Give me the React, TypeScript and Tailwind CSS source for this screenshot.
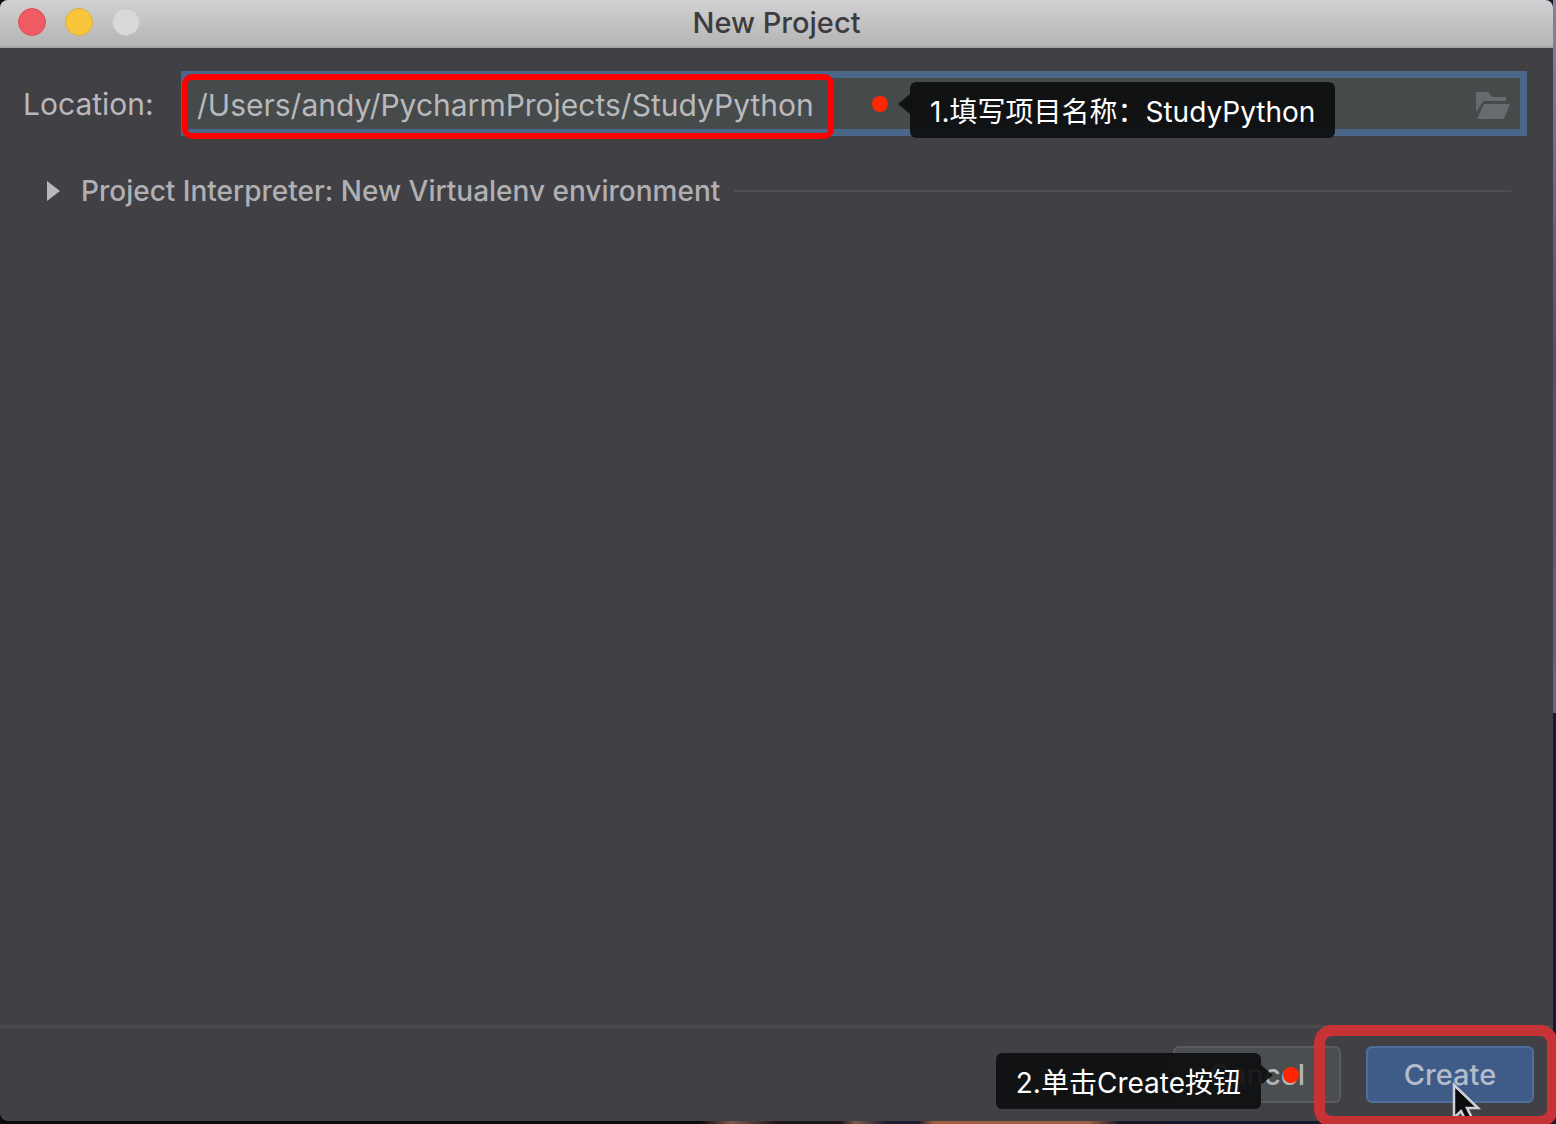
import * as React from "react";

const Callout = ({ side, children }: { side: "left" | "right"; children: React.ReactNode }) => (
  <div
    role="note"
    className="relative flex h-14 items-center whitespace-nowrap rounded-md bg-[#0c0d0e]/91 px-5 pt-1 text-[28px] text-white"
  >
    {side === "left" ? (
      <svg className="absolute top-3 -left-3 h-5 w-3" viewBox="0 0 12 20" fill="#0c0d0e" fillOpacity={0.91}>
        <path d="M12 0v20L0 10z" />
      </svg>
    ) : (
      <svg className="absolute top-3 -right-3 h-5 w-3" viewBox="0 0 12 20" fill="#0c0d0e" fillOpacity={0.91}>
        <path d="M0 0v20l12-10z" />
      </svg>
    )}
    {children}
  </div>
);

const Dot = () => <span className="size-4 shrink-0 rounded-full bg-[#ff2600]" />;

const FolderIcon = () => (
  <svg className="h-[27px] w-[35px]" viewBox="0 0 35 27" fill="#676b6d">
    <path d="M1 0h12l4 5h14v4H8L2 19H1z" />
    <path d="M9 12h26l-6 15H2z" />
  </svg>
);

const Pointer = () => (
  <svg
    className="pointer-events-none absolute top-9 left-[86px] h-11 w-[30px]"
    viewBox="0 0 30 44"
    fill="#0b0b0d"
    stroke="#d0d0d6"
    strokeWidth="2.5"
  >
    <path d="M2 3v33l7-7 6 12 6-3-6-12h11z" />
  </svg>
);

const App = () => {
  const [location, setLocation] = React.useState("/Users/andy/PycharmProjects/StudyPython");
  const [open, setOpen] = React.useState(false);

  return (
    <div className="h-screen overflow-hidden bg-[linear-gradient(to_right,#0d0a10_0%,#0d0a10_45%,#7d5a4c_47%,#1c141c_50%,#1c141c_54%,#7d5a4c_55%,#1c1c30_57%,#1c1c30_59%,#a0603f_60%,#9a5f48_70%,#141626_72%,#141a30_100%)] pr-[3px] pb-[3px] font-['Inter','Noto_Sans_CJK_SC',sans-serif]">
      <div className="relative flex h-full flex-col">
        <div className="absolute top-0 -right-[3px] h-[713px] w-[3px] bg-linear-to-b from-[#85849a] via-[#5c4a68] to-[#6b6485]" />
        <div className="flex flex-1 flex-col rounded-lg bg-[#414044]">
          <header className="relative flex h-12 items-center justify-center rounded-t-lg border-b-2 border-[#a5a5a5] bg-linear-to-b from-[#d2d1d3] to-[#b5b5b5]">
            <div className="absolute top-2 left-[18px] flex gap-[19px]">
              <button aria-label="Close" className="size-7 rounded-full border border-[#d9505a] bg-[#ef5b62]" />
              <button aria-label="Minimize" className="size-7 rounded-full border border-[#e0ae3c] bg-[#f8c63c]" />
              <button aria-label="Zoom" disabled className="size-7 rounded-full border border-[#c8c8c8] bg-[#d9d9d9]" />
            </div>
            <h1 className="text-[29px] font-medium text-[#3c3c3e]">New Project</h1>
          </header>

          <main className="flex-1 pr-[26px] pl-[23px] pt-[23px]">
            <div className="flex items-center">
              <label htmlFor="location" className="w-[158px] shrink-0 pt-0.5 text-[30px] text-[#b9b9bd]">
                Location:
              </label>
              <div className="relative flex-1">
                <input
                  id="location"
                  value={location}
                  onChange={(e) => setLocation(e.target.value)}
                  className="h-[65px] w-full border-7 border-[#4a6789] bg-[#464a4b] pt-0.5 pr-14 pl-[9px] text-[30px] text-[#b9b9bd] outline-none"
                />
                <button aria-label="Browse" className="absolute top-[21px] right-[17px]">
                  <FolderIcon />
                </button>
                <div className="pointer-events-none absolute top-[3px] left-px h-[65px] w-[652px] rounded-[10px] border-6 border-[#ff0000]" />
                <div className="pointer-events-none absolute top-[11px] left-[691px] flex items-start gap-[22px]">
                  <span className="flex pt-[14px]">
                    <Dot />
                  </span>
                  <Callout side="left">1.填写项目名称：StudyPython</Callout>
                </div>
              </div>
            </div>

            <div className="mt-[34px] mr-4 ml-6 flex items-center gap-[14px]">
              <button
                aria-expanded={open}
                onClick={() => setOpen(!open)}
                className="flex items-center gap-[21px] text-[28px] font-medium text-[#b0b0b4]"
              >
                <svg className="h-5 w-[13px]" viewBox="0 0 13 20" fill="#b9b9bd">
                  <path d="M0 0v20l13-10z" />
                </svg>
                Project Interpreter: New Virtualenv environment
              </button>
              <div className="h-0.5 flex-1 bg-[#4e4e52]" />
            </div>
          </main>

          <footer className="relative flex justify-end gap-[25px] border-t-3 border-[#4a494e] py-[18px] pr-[19px]">
            <button className="h-[57px] w-[168px] rounded-md border-2 border-[#5a5c5f] bg-[#4b4e50] text-[29px] font-medium text-[#b4b4b8]">
              Cancel
            </button>
            <div className="relative">
              <button className="h-[57px] w-[168px] rounded-md border-2 border-[#4e6f9c] bg-[#3f5b87] text-[29px] font-medium text-[#b4bccb]">
                Create
              </button>
              <Pointer />
            </div>
            <div className="pointer-events-none absolute -top-[3px] -right-[5px] h-[102px] w-[244px] rounded-[18px] border-11 border-[#c73235]" />
            <div className="pointer-events-none absolute top-[25px] right-[254px] flex items-start gap-[22px]">
              <Callout side="right">2.单击Create按钮</Callout>
              <span className="flex pt-[14px]">
                <Dot />
              </span>
            </div>
          </footer>
        </div>
      </div>
    </div>
  );
};

export default App;
